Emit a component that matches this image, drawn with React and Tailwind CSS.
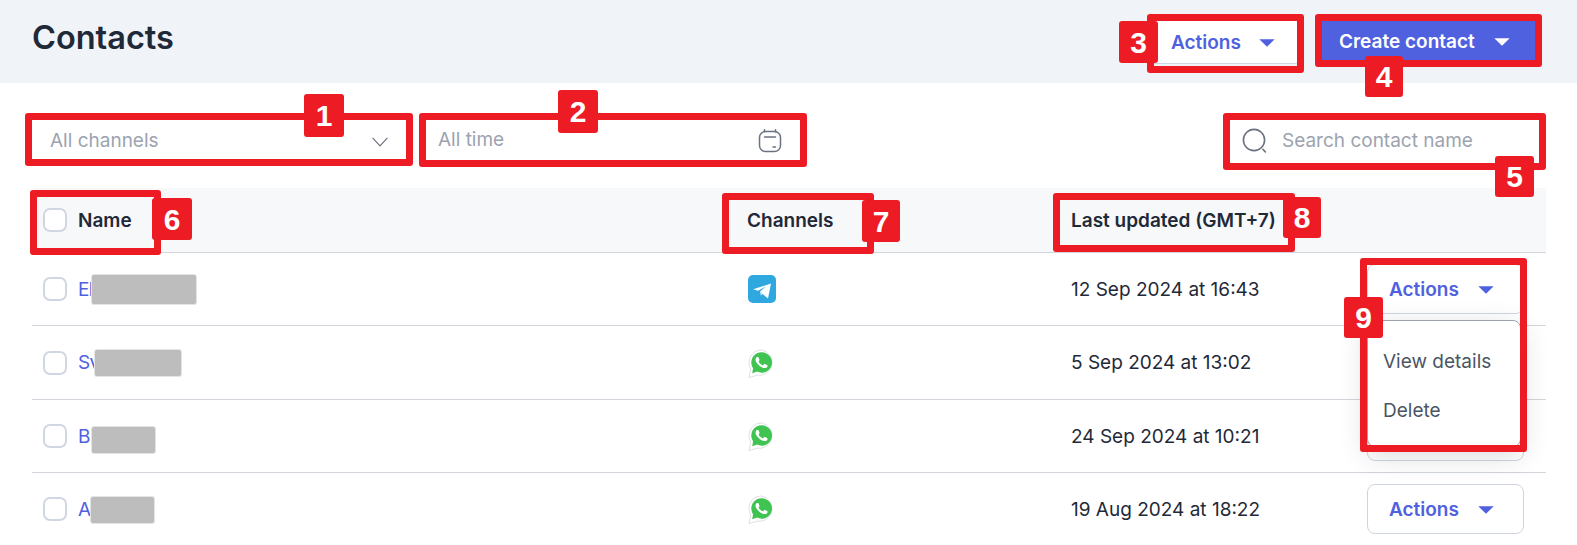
const font = { fontFamily: "Inter, sans-serif" }

const Caret = ({ className }) => (
  <svg viewBox="0 0 16 8" className={className} fill="currentColor">
    <path d="M0.3 0.3h15.4L8 7.7z" />
  </svg>
)

const Telegram = () => (
  <svg viewBox="0 0 28 28" className="w-7 h-7">
    <rect width="28" height="28" rx="5" fill="#2fa8e0" />
    <path d="M5.2 14.2 23 8.6 20 23.4 14.5 19 12 16.6 18 11.4 10 15.8z" fill="#ffffff" />
    <path d="M12 16.6 14.5 19 12.8 20.4z" fill="#d5ecf8" />
  </svg>
)

const Whatsapp = () => (
  <svg viewBox="0 0 28 30" className="w-7 h-[30px] mt-[2px]">
    <path d="M13.5 1C6.6 1 1 6.600 1 13.500c0 2.400.7 4.600 1.800 6.500L1 28.600l8.200-2.400a12.500 12.500 0 1 0 4.300-25.200z" fill="#ffffff" stroke="#cfd3d8" strokeWidth="0.7" />
    <path d="M13.500 3.300C7.900 3.300 3.300 7.900 3.300 13.500c0 2.100.7 4.100 1.800 5.800L4.200 24.200l5-1.600A10.200 10.200 0 1 0 13.500 3.300z" fill="#3fc351" />
    <path transform="translate(1.5 1.5)" fill="#ffffff" d="M17.472 14.382c-.297-.149-1.758-.867-2.03-.967-.273-.099-.471-.148-.67.15-.197.297-.767.966-.94 1.164-.173.199-.347.223-.644.075-.297-.15-1.255-.463-2.39-1.475-.883-.788-1.48-1.761-1.653-2.059-.173-.297-.018-.458.13-.606.134-.133.298-.347.446-.52.149-.174.198-.298.298-.497.099-.198.05-.371-.025-.52-.075-.149-.669-1.612-.916-2.207-.242-.579-.487-.5-.669-.51-.173-.008-.371-.01-.57-.01-.198 0-.52.074-.792.372-.272.297-1.04 1.016-1.04 2.479 0 1.462 1.065 2.875 1.213 3.074.149.198 2.096 3.2 5.077 4.487.709.306 1.262.489 1.694.625.712.227 1.36.195 1.871.118.571-.085 1.758-.719 2.006-1.413.248-.694.248-1.289.173-1.413-.074-.124-.272-.198-.57-.347z" />
  </svg>
)

const Checkbox = () => (
  <span className="block w-6 h-6 shrink-0 rounded-[7px] border-2 border-[#d1d7e2] bg-white"></span>
)

const ActionsButton = ({ covered }) => (
  <button className="flex items-center w-[157px] h-[50px] pl-[21px] pt-[2px] rounded-lg border border-[#cfd5e0] bg-white text-[19px] font-semibold text-[#4f61df]">
    {!covered && "Actions"}
    {!covered && <Caret className="w-4 h-2 ml-[19px]" />}
  </button>
)

// row 2 and 3 buttons sit behind the open menu
const rows = [
  { name: "El", channel: "telegram", date: "12 Sep 2024 at 16:43" },
  { name: "Sv", channel: "whatsapp", date: "5 Sep 2024 at 13:02", covered: true },
  { name: "B", channel: "whatsapp", date: "24 Sep 2024 at 10:21", covered: true },
  { name: "A", channel: "whatsapp", date: "19 Aug 2024 at 18:22" },
]

// red rectangles and number tags drawn on top of the screenshot
const Outline = ({ className }) => (
  <div className={`absolute border-[7px] border-[#ed1c24] rounded-[3px] ${className}`}></div>
)

const Tag = ({ className, children }) => (
  <div
    className={`absolute flex items-center justify-center rounded-[3px] bg-[#ed1c24] text-white text-[30px] font-bold ${className}`}
    style={{ fontFamily: "'Liberation Sans', sans-serif" }}
  >
    {children}
  </div>
)

const Redact = ({ className }) => (
  <div className={`absolute rounded-[3px] border border-[#e4e4e4] bg-[#bdbdbd] ${className}`}></div>
)

const App = () => {
  return (
    <div className="relative w-full h-[545px] overflow-hidden bg-white text-[#1f2937]" style={font}>
      <div className="flex items-start justify-between h-[83px] pl-8 pr-10 pt-[19px] bg-[#f0f3f8]">
        <h1 className="text-[32.5px] leading-9 font-semibold mt-[1px]">Contacts</h1>
        <div className="flex gap-5">
          <button className="flex items-center w-[152px] h-[45px] pl-[23px] pt-[3px] rounded-sm border border-[#cfd5e0] bg-white text-[19px] font-semibold text-[#4f61df]">
            Actions
            <Caret className="w-4 h-2 ml-[18px]" />
          </button>
          <button className="flex items-center w-[218px] h-[43px] pl-[20px] pt-[3px] bg-[#4f61df] text-[19px] font-semibold text-white">
            Create contact
            <Caret className="w-4 h-2 ml-[19px]" />
          </button>
        </div>
      </div>

      <div className="flex items-start h-[105px] pl-8 pr-[31px] pt-9 text-[19px] text-[#9ca3af]">
        <div className="flex items-center justify-between w-[376px] h-[45px] pl-[18px] pr-5">
          All channels
          <svg viewBox="0 0 16 10" className="w-4 h-[10px]" fill="none" stroke="#6b7280" strokeWidth="1.2">
            <path d="M0.6 0.8 8 8.8 15.4 0.8" />
          </svg>
        </div>
        <div className="flex items-center justify-between w-[376px] h-[44px] ml-[17px] pl-[13px] pr-[18px] border-r border-b border-[#d1d5db]">
          All time
          <svg viewBox="0 0 24 24" className="w-6 h-6" fill="none" stroke="#6b7280" strokeWidth="1.5" strokeLinecap="round">
            <rect x="1.5" y="2.5" width="21" height="20" rx="6" />
            <path d="M6.5 0.8v2M17.5 0.8v2M6.5 8h11M15 18h2.500" />
          </svg>
        </div>
        <div className="flex items-center w-[317px] h-[44px] ml-auto pl-[13px]">
          <svg viewBox="0 0 26 26" className="w-[26px] h-[26px]" fill="none" stroke="#6b7280" strokeWidth="1.6" strokeLinecap="round">
            <circle cx="12" cy="12" r="10.6" />
            <path d="M21 21.4 23.4 24" />
          </svg>
          <span className="ml-[14px]">Search contact name</span>
        </div>
      </div>

      <div className="ml-8 mr-[31px]">
        <div className="grid grid-cols-[715px_324px_1fr] items-center h-[65px] border-b border-[#d1d5db] bg-[#f7f8fa] text-[19px] font-semibold">
          <div className="flex items-center gap-[11px] pl-[11px]">
            <Checkbox />
            <span className="pt-[3px]">Name</span>
          </div>
          <div className="pt-[3px]">Channels</div>
          <div className="pt-[3px]">Last updated (GMT+7)</div>
        </div>
        {rows.map((row, key) => (
          <div key={key} className="grid grid-cols-[715px_324px_1fr] items-center h-[73.4px] border-b border-[#d1d5db] last:border-transparent text-[19px]">
            <div className="flex items-center gap-[11px] pl-[11px] text-[#4f61df]">
              <Checkbox />
              <span className="pt-[2px] tracking-[-0.6px]">{row.name}</span>
            </div>
            <div className="pl-[1px]">
              {row.channel === "telegram" ? <Telegram /> : <Whatsapp />}
            </div>
            <div className="flex items-center justify-between pr-[22px]">
              <span className="pt-[2px]">{row.date}</span>
              <ActionsButton covered={row.covered} />
            </div>
          </div>
        ))}
      </div>

      <Redact className="left-[91px] top-[274px] w-[106px] h-[31px]" />
      <Redact className="left-[94px] top-[349px] w-[88px] h-[28px]" />
      <Redact className="left-[91px] top-[426px] w-[65px] h-[28px]" />
      <Redact className="left-[90px] top-[496px] w-[65px] h-[28px]" />

      <div className="absolute left-[1367px] top-[320px] w-[154px] h-[127px] rounded-lg border border-[#9ca3af] bg-white text-[19px] text-[#4b5563] shadow-[0_8px_28px_rgba(31,41,55,0.18)]">
        <div className="pl-[15px] pt-[29px] leading-6">View details</div>
        <div className="pl-[15px] pt-[25px] leading-6">Delete</div>
      </div>

      <Outline className="left-[25px] top-[113px] w-[388px] h-[53px]" />
      <Outline className="left-[419px] top-[113px] w-[388px] h-[54px]" />
      <Outline className="left-[1147px] top-[14px] w-[157px] h-[59px]" />
      <Outline className="left-[1315px] top-[14px] w-[227px] h-[53px]" />
      <Outline className="left-[1223px] top-[113px] w-[323px] h-[57px]" />
      <Outline className="left-[30px] top-[190px] w-[131px] h-[65px]" />
      <Outline className="left-[722px] top-[193px] w-[152px] h-[61px]" />
      <Outline className="left-[1053px] top-[193px] w-[242px] h-[59px]" />
      <Outline className="left-[1360px] top-[258px] w-[167px] h-[194px]" />

      <Tag className="left-[304px] top-[94px] w-[40px] h-[43px]">1</Tag>
      <Tag className="left-[558px] top-[90px] w-[40px] h-[43px]">2</Tag>
      <Tag className="left-[1119px] top-[21px] w-[39px] h-[42px]">3</Tag>
      <Tag className="left-[1365px] top-[56px] w-[38px] h-[41px]">4</Tag>
      <Tag className="left-[1495px] top-[156px] w-[39px] h-[41px]">5</Tag>
      <Tag className="left-[152px] top-[198px] w-[40px] h-[42px]">6</Tag>
      <Tag className="left-[862px] top-[200px] w-[38px] h-[42px]">7</Tag>
      <Tag className="left-[1283px] top-[197px] w-[38px] h-[41px]">8</Tag>
      <Tag className="left-[1344px] top-[297px] w-[39px] h-[41px]">9</Tag>
    </div>
  )
}

export default App
